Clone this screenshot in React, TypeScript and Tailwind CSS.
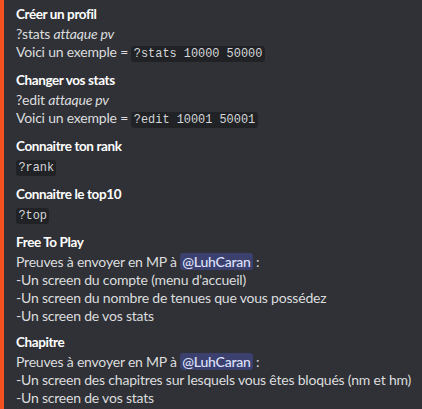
import React from "react";

function Code({ children }: { children: React.ReactNode }) {
  return (
    <code className="rounded-[3px] bg-[#202225] px-[2.4px] py-[1px] font-['Liberation_Mono','DejaVu_Sans_Mono',monospace] text-[11.9px] tracking-normal text-[#d4d6d9]">
      {children}
    </code>
  );
}

function Mention({ children }: { children: React.ReactNode }) {
  return (
    <span className="rounded-[3px] bg-[#5865f2]/30 px-[2px] font-medium text-[#dee0fc]">
      {children}
    </span>
  );
}

function Field({ name, children }: { name: string; children: React.ReactNode }) {
  return (
    <div className="flex flex-col">
      <div className="mb-[2px] text-[13.5px] font-bold tracking-[-0.4px] text-white">{name}</div>
      <div className="whitespace-nowrap tracking-[-0.2px] text-[#dcddde]">{children}</div>
    </div>
  );
}

export default function App() {
  return (
    <div className="flex h-[409px] w-full overflow-hidden bg-[#2f3136] font-['Lato',sans-serif] text-[14px] leading-[18px]">
      <div className="w-[4px] shrink-0 bg-[#f4511e]" />
      <div className="flex flex-col gap-[8px] pl-[12px] pt-[5px]">
        <Field name="Créer un profil">
          <div>
            ?stats <em>attaque pv</em>
          </div>
          <div>
            Voici un exemple = <Code>?stats 10000 50000</Code>
          </div>
        </Field>
        <Field name="Changer vos stats">
          <div>
            ?edit <em>attaque pv</em>
          </div>
          <div>
            Voici un exemple = <Code>?edit 10001 50001</Code>
          </div>
        </Field>
        <Field name="Connaitre ton rank">
          <div>
            <Code>?rank</Code>
          </div>
        </Field>
        <Field name="Connaitre le top10">
          <div>
            <Code>?top</Code>
          </div>
        </Field>
        <Field name="Free To Play">
          <div>
            Preuves à envoyer en MP à <Mention>@LuhCaran</Mention> :
          </div>
          <div>-Un screen du compte (menu d'accueil)</div>
          <div>-Un screen du nombre de tenues que vous possédez</div>
          <div>-Un screen de vos stats</div>
        </Field>
        <Field name="Chapitre">
          <div>
            Preuves à envoyer en MP à <Mention>@LuhCaran</Mention> :
          </div>
          <div>-Un screen des chapitres sur lesquels vous êtes bloqués (nm et hm)</div>
          <div>-Un screen de vos stats</div>
        </Field>
      </div>
    </div>
  );
}
